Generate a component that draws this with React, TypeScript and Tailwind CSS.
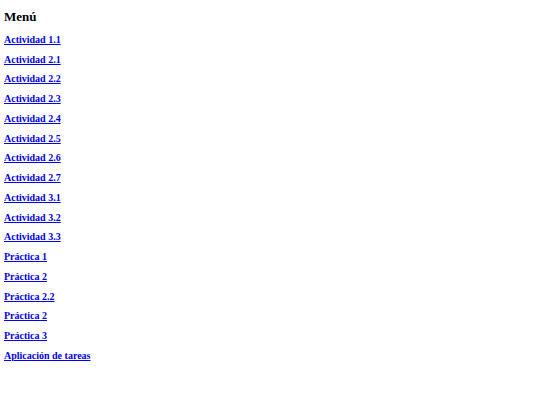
const LINKS = [
  'Actividad 1.1',
  'Actividad 2.1',
  'Actividad 2.2',
  'Actividad 2.3',
  'Actividad 2.4',
  'Actividad 2.5',
  'Actividad 2.6',
  'Actividad 2.7',
  'Actividad 3.1',
  'Actividad 3.2',
  'Actividad 3.3',
  'Práctica 1',
  'Práctica 2',
  'Práctica 2.2',
  'Práctica 2',
  'Práctica 3',
  'Aplicación de tareas',
]

export default function App() {
  return (
    <div className="min-h-[405px] bg-white px-[4px] pt-[7px] font-['Liberation_Serif',serif] text-black">
      <h2 className="text-[13px] font-bold leading-[20px]">Menú</h2>
      <nav className="mt-[3px] flex flex-col">
        {LINKS.map((label, i) => (
          <div key={i} className="flex h-[19.75px] items-center">
            <a href="#" className="text-[10px] font-bold leading-none text-[#0000ee] underline">
              {label}
            </a>
          </div>
        ))}
      </nav>
    </div>
  )
}
